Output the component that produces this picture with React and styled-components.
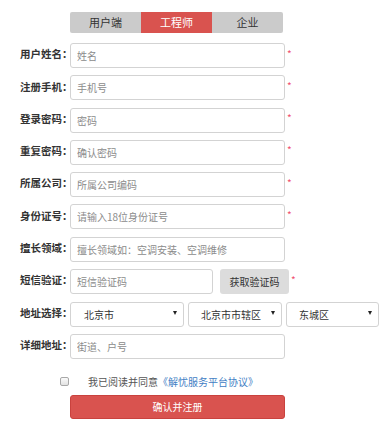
import React from "react";
import styled, { createGlobalStyle } from "styled-components";

const Global = createGlobalStyle`
  html, body { margin: 0; padding: 0; background: #fff; }
  body { font-family: "Noto Sans CJK SC", "Noto Sans", sans-serif; color: #333; }
  * { box-sizing: border-box; }
`;

const Page = styled.div`
  width: 385px;
  height: 423px;
  padding-top: 12px;
  overflow: hidden;
`;

const Tabs = styled.div`
  display: flex;
  margin-left: 70px;
  width: 213px;
  height: 21px;
  border-radius: 2px;
  overflow: hidden;
`;

const Tab = styled.div`
  flex: 1;
  display: flex;
  align-items: center;
  justify-content: center;
  font-size: 11px;
  line-height: 1;
  background: ${(p) => (p.$active ? "#d9534f" : "#cbcbcb")};
  color: ${(p) => (p.$active ? "#fff" : "#333")};
`;

const Form = styled.div`
  display: flex;
  flex-direction: column;
  gap: 7.3px;
  margin-top: 10px;
`;

const Row = styled.div`
  display: flex;
  align-items: center;
  height: 25px;
`;

const Label = styled.div`
  width: 70px;
  flex: none;
  padding-left: 20px;
  white-space: nowrap;
  font-size: 10.5px;
  font-weight: bold;
  color: #333;
  line-height: 1;
  position: relative;
  top: -1px;
`;

const Input = styled.input`
  width: ${(p) => p.$w || 215}px;
  flex: none;
  height: 25px;
  border: 1px solid #d3d3d3;
  border-radius: 3px;
  padding: 0 6px;
  font-family: "Noto Sans CJK SC", "Noto Sans", sans-serif;
  font-size: 10px;
  color: #333;
  background: #fff;
  outline: none;
  &::placeholder { color: #8c8c8c; }
`;

const Star = styled.span`
  color: #f0506e;
  font-size: 10px;
  margin-left: ${(p) => p.$ml ?? 2}px;
  line-height: 1;
  position: relative;
  top: -2px;
`;

const CodeButton = styled.button`
  width: 69px;
  height: 25px;
  margin-left: 7px;
  flex: none;
  border: none;
  border-radius: 3px;
  background: #dcdcdc;
  color: #333;
  font-family: "Noto Sans CJK SC", "Noto Sans", sans-serif;
  font-size: 10px;
  padding: 0;
`;

const SelectWrap = styled.div`
  position: relative;
  width: ${(p) => p.$w}px;
  margin-right: 4px;
  flex: none;
  &::after {
    content: "";
    position: absolute;
    right: 7px;
    top: 11px;
    border-left: 2.5px solid transparent;
    border-right: 2.5px solid transparent;
    border-top: 4px solid #222;
    pointer-events: none;
  }
`;

const Select = styled.select`
  appearance: none;
  width: 100%;
  height: 25px;
  border: 1px solid #d3d3d3;
  border-radius: 3px;
  background: #fff;
  padding: 0 0 0 ${(p) => p.$pl || 12}px;
  font-family: "Noto Sans CJK SC", "Noto Sans", sans-serif;
  font-size: 10px;
  color: #333;
  outline: none;
`;

const AgreeRow = styled.div`
  display: flex;
  align-items: center;
  height: 16px;
  margin-top: 15px;
  padding-left: 60px;
  font-size: 10px;
  color: #555;
  line-height: 1;
`;

const Check = styled.input`
  appearance: none;
  width: 9px;
  height: 9px;
  margin: 0 19px 0 0;
  border: 1px solid #a8a8a8;
  border-radius: 2px;
  background: linear-gradient(#fafafa, #e2e2e2);
`;

const Link = styled.span`
  color: #3f80c4;
`;

const Submit = styled.button`
  display: block;
  margin: 5px 0 0 70px;
  width: 215px;
  height: 24px;
  border: 1px solid #c9423e;
  border-radius: 3px;
  background: #d9534f;
  color: #fff;
  font-family: "Noto Sans CJK SC", "Noto Sans", sans-serif;
  font-size: 10px;
  padding: 0;
`;

const fields = [
  ["用户姓名：", "姓名", true],
  ["注册手机：", "手机号", true],
  ["登录密码：", "密码", true],
  ["重复密码：", "确认密码", true],
  ["所属公司：", "所属公司编码", true],
  ["身份证号：", "请输入18位身份证号", true],
  ["擅长领域：", "擅长领域如：空调安装、空调维修", false],
];

export default function App() {
  return (
    <Page>
      <Global />
      <Tabs>
        <Tab>用户端</Tab>
        <Tab $active>工程师</Tab>
        <Tab>企业</Tab>
      </Tabs>
      <Form>
        {fields.map(([label, ph, req]) => (
          <Row key={label}>
            <Label>{label}</Label>
            <Input placeholder={ph} />
            {req && <Star>*</Star>}
          </Row>
        ))}
        <Row>
          <Label>短信验证：</Label>
          <Input $w={143} placeholder="短信验证码" />
          <CodeButton>获取验证码</CodeButton>
          <Star>*</Star>
        </Row>
        <Row>
          <Label>地址选择：</Label>
          <SelectWrap $w={114}>
            <Select $pl={13}><option>北京市</option></Select>
          </SelectWrap>
          <SelectWrap $w={94}>
            <Select><option>北京市市辖区</option></Select>
          </SelectWrap>
          <SelectWrap $w={93}>
            <Select><option>东城区</option></Select>
          </SelectWrap>
        </Row>
        <Row>
          <Label>详细地址：</Label>
          <Input placeholder="街道、户号" />
        </Row>
      </Form>
      <AgreeRow>
        <Check type="checkbox" />
        <span>我已阅读并同意</span>
        <Link>《解忧服务平台协议》</Link>
      </AgreeRow>
      <Submit>确认并注册</Submit>
    </Page>
  );
}
